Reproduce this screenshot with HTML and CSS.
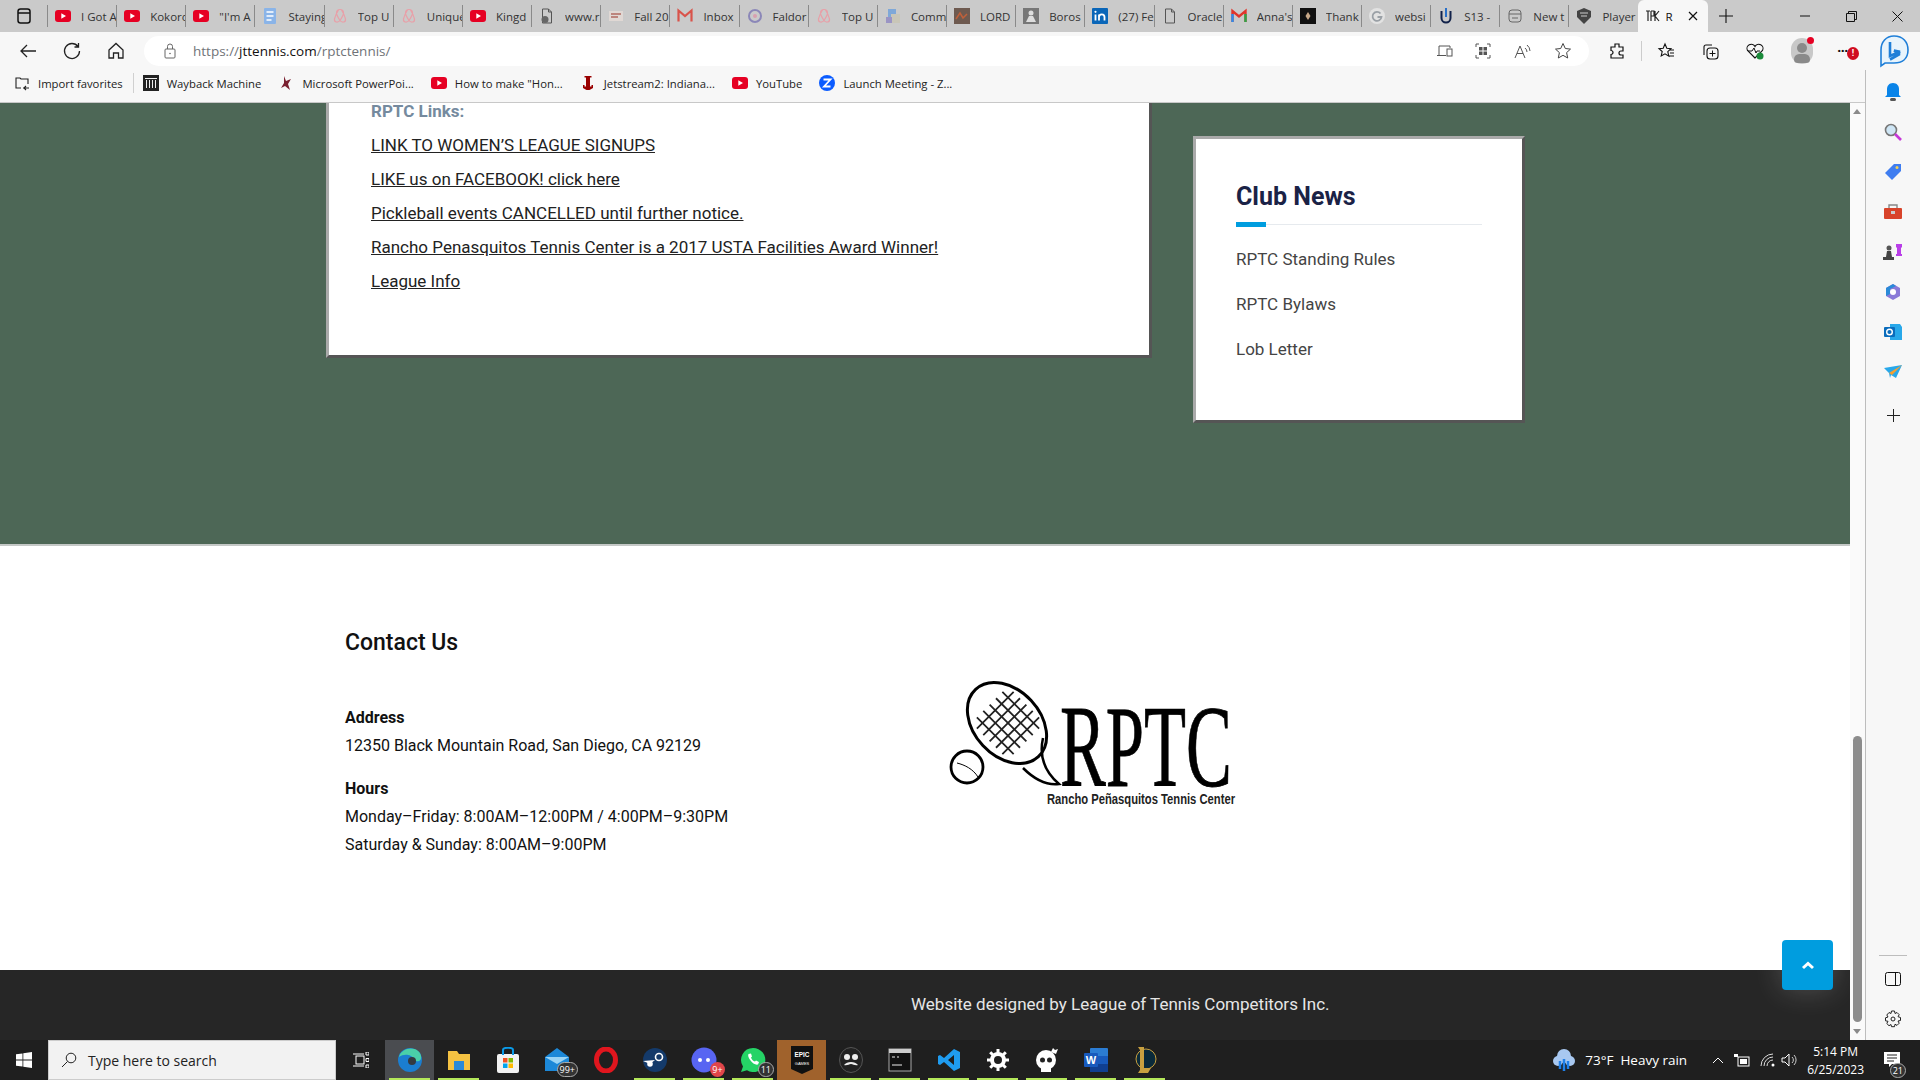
FILE: index.html
```html
<!DOCTYPE html>
<html lang="en">
<head>
    <meta charset="UTF-8">
    <title>RPTC Tennis</title>
    <link rel="stylesheet" href="styles.css">
</head>
<body>

<svg class="defs" width="0" height="0">
    <symbol id="yt" viewBox="0 0 16 16"><rect y="2" width="16" height="12" rx="3" fill="#e60023"/><path d="M6.3 5.2v5.6L11 8z" fill="#fff"/></symbol>
    <symbol id="air" viewBox="0 0 16 16"><path d="M8 12.5C5 8 4.5 6 4.5 5a3.5 3.5 0 0 1 7 0c0 1-.5 3-3.5 7.5zM8 12.5c2 2.5 6 2 5.5-1.5C13 9 10.5 3.5 9.5 2M8 12.5c-2 2.5-6 2-5.5-1.5C3 9 5.5 3.5 6.5 2" fill="none" stroke="#e8a0a8" stroke-width="1.2"/></symbol>
    <symbol id="page" viewBox="0 0 16 16"><path d="M3.5 1h6l3 3v11h-9zM9.5 1v3h3" fill="none" stroke="#555"/></symbol>
    <symbol id="grid" viewBox="0 0 16 16"><rect x="2" y="2" width="12" height="12" rx="3" fill="none" stroke="#666"/><path d="M2 6h12M5 10h6" stroke="#666"/></symbol>
</svg>

<div class="tabstrip">
    <div class="strip-btn">
        <svg width="14" height="16" viewBox="0 0 14 16"><rect x="1" y="1" width="12" height="14" rx="2.5" fill="none" stroke="#111" stroke-width="1.5"/><path d="M1 5h12" stroke="#111" stroke-width="1.5"/></svg>
    </div>
    <div class="tab"><svg class="fav"><use href="#yt"/></svg><span>I Got A</span></div>
    <div class="tab"><svg class="fav"><use href="#yt"/></svg><span>Kokoro</span></div>
    <div class="tab"><svg class="fav"><use href="#yt"/></svg><span>"I'm A</span></div>
    <div class="tab"><svg class="fav" viewBox="0 0 16 16"><rect x="2" width="12" height="16" rx="1" fill="#8ab4e8"/><path d="M4.5 4h7M4.5 8h7M4.5 12h5" stroke="#fff" stroke-width="1.4"/></svg><span>Staying</span></div>
    <div class="tab"><svg class="fav"><use href="#air"/></svg><span>Top U</span></div>
    <div class="tab"><svg class="fav"><use href="#air"/></svg><span>Unique</span></div>
    <div class="tab"><svg class="fav"><use href="#yt"/></svg><span>Kingd</span></div>
    <div class="tab"><svg class="fav" viewBox="0 0 16 16"><use href="#page"/><circle cx="6" cy="11.5" r="3.5" fill="#666"/></svg><span>www.r</span></div>
    <div class="tab"><svg class="fav" viewBox="0 0 16 16"><rect x="1" y="3" width="14" height="10" fill="#e0d8d4"/><path d="M3 6h10M3 9h7" stroke="#b06a60" stroke-width="1.5"/></svg><span>Fall 20</span></div>
    <div class="tab"><svg class="fav" viewBox="0 0 16 16"><path d="M1.5 13.5v-11L8 8l6.5-5.5v11" fill="none" stroke="#d9534a" stroke-width="2.2"/></svg><span>Inbox</span></div>
    <div class="tab"><svg class="fav" viewBox="0 0 16 16"><circle cx="8" cy="8" r="6" fill="none" stroke="#8b87b8" stroke-width="2"/><circle cx="8" cy="8" r="2" fill="#d9a0b0"/></svg><span>Faldor</span></div>
    <div class="tab"><svg class="fav"><use href="#air"/></svg><span>Top U</span></div>
    <div class="tab"><svg class="fav" viewBox="0 0 16 16"><rect x="3" y="1" width="8" height="10" fill="#7fa8d8"/><rect x="6" y="6" width="9" height="9" fill="#c9c6b8"/><rect x="1" y="9" width="6" height="6" fill="#9a94c4"/></svg><span>Comm</span></div>
    <div class="tab"><svg class="fav" viewBox="0 0 16 16"><rect width="16" height="16" fill="#6e5a50"/><path d="M2 11l4-6 3 5 4-4" stroke="#c0603a" fill="none" stroke-width="1.5"/></svg><span>LORD</span></div>
    <div class="tab"><svg class="fav" viewBox="0 0 16 16"><rect width="16" height="16" fill="#777"/><circle cx="8" cy="5" r="2.5" fill="#ddd"/><path d="M3 14l3-6h4l3 6z" fill="#ddd"/></svg><span>Boros</span></div>
    <div class="tab"><svg class="fav" viewBox="0 0 16 16"><rect width="16" height="16" rx="1" fill="#0a66b8"/><path d="M3.5 6.5v6M7 12.5v-6M7 9c0-3.5 5.5-3.5 5.5 0v3.5" stroke="#fff" stroke-width="1.8" fill="none"/><circle cx="3.5" cy="3.8" r="1.1" fill="#fff"/></svg><span>(27) Fe</span></div>
    <div class="tab"><svg class="fav"><use href="#page"/></svg><span>Oracle</span></div>
    <div class="tab"><svg class="fav" viewBox="0 0 16 16"><path d="M1.5 14V3L8 8.5 14.5 3v11" fill="none" stroke="#e0352b" stroke-width="2.4"/><path d="M1.5 14V6" stroke="#2a8ff0" stroke-width="2.4"/><path d="M14.5 14V6" stroke="#2aa84a" stroke-width="2.4"/></svg><span>Anna's</span></div>
    <div class="tab"><svg class="fav" viewBox="0 0 16 16"><rect width="16" height="16" fill="#111"/><path d="M8 4l2.5 4L8 12 5.5 8z" fill="#c8a888"/></svg><span>Thank</span></div>
    <div class="tab"><svg class="fav" viewBox="0 0 16 16"><circle cx="8" cy="8" r="8" fill="#e2e2e2"/><path d="M11.5 5.5A4.5 4.5 0 1 0 12.5 9H8.5" fill="none" stroke="#9aa0a6" stroke-width="1.8"/></svg><span>websi</span></div>
    <div class="tab"><svg class="fav" viewBox="0 0 16 16"><path d="M3.5 3v7a4.5 4.5 0 0 0 9 0V3" fill="none" stroke="#12224a" stroke-width="2"/><path d="M8 0v9" stroke="#2a70c8" stroke-width="2"/></svg><span>S13 -</span></div>
    <div class="tab"><svg class="fav"><use href="#grid"/></svg><span>New t</span></div>
    <div class="tab"><svg class="fav" viewBox="0 0 16 16"><path d="M8 0l7 3v6l-7 7-7-7V3z" fill="#444"/><path d="M4 5h8M5 8h6" stroke="#ccc"/></svg><span>Player</span></div>
    <div class="tab active">
        <svg class="fav" viewBox="0 0 16 16"><path d="M1 3h4M3 3v10M6 3v10M6 3h3v5H6M10 3v10M14 3l-4 5 4 5" fill="none" stroke="#222" stroke-width="1.2"/></svg><span>R</span>
        <svg class="tab-close" width="10" height="10" viewBox="0 0 10 10"><path d="M1 1l8 8M9 1l-8 8" stroke="#111" stroke-width="1.2"/></svg>
    </div>
    <svg class="new-tab" width="14" height="14" viewBox="0 0 14 14"><path d="M7 0v14M0 7h14" stroke="#111" stroke-width="1.1"/></svg>
    <div class="window-btns">
        <svg width="10" height="10" viewBox="0 0 10 10"><path d="M0 5h10" stroke="#111"/></svg>
        <svg width="11" height="11" viewBox="0 0 11 11"><path d="M.5 2.5h8v8h-8zM2.5 2.5v-2h8v8h-2" fill="none" stroke="#111"/></svg>
        <svg width="11" height="11" viewBox="0 0 11 11"><path d="M.5.5l10 10M10.5.5l-10 10" stroke="#111"/></svg>
    </div>
</div>

<div class="toolbar">
    <svg class="nav-icon" viewBox="0 0 20 20"><path d="M18 10H3M9 4l-6 6 6 6" fill="none" stroke="#222" stroke-width="1.3"/></svg>
    <svg class="nav-icon" viewBox="0 0 20 20"><path d="M16 5.5A7.5 7.5 0 1 0 17.5 10M16.5 2v4h-4" fill="none" stroke="#222" stroke-width="1.3"/></svg>
    <svg class="nav-icon" viewBox="0 0 20 20"><path d="M3 9l7-6.5L17 9v8h-4.5v-5h-5v5H3z" fill="none" stroke="#222" stroke-width="1.3"/></svg>
    <div class="address">
        <svg class="lock" width="12" height="16" viewBox="0 0 12 16"><rect x="1" y="6" width="10" height="9" rx="1" fill="none" stroke="#666"/><path d="M3.5 6V3.5a2.5 2.5 0 0 1 5 0V6" fill="none" stroke="#666"/><circle cx="6" cy="10.5" r=".8" fill="#666"/></svg>
        <span class="url"><span class="url-dim">https://</span>jttennis.com<span class="url-dim">/rptctennis/</span></span>
        <div class="address-icons">
            <svg width="16" height="16" viewBox="0 0 16 16"><path d="M2 12V3h11v2M0 12.5h9" fill="none" stroke="#555"/><rect x="10" y="6" width="5" height="7" fill="none" stroke="#555"/></svg>
            <svg width="16" height="16" viewBox="0 0 16 16"><path d="M1 4V1h3M12 1h3v3M15 12v3h-3M4 15H1v-3" fill="none" stroke="#555"/><rect x="4" y="4" width="3.5" height="3.5" fill="#555"/><rect x="8.5" y="4" width="3.5" height="3.5" fill="#555"/><rect x="4" y="8.5" width="3.5" height="3.5" fill="#555"/><rect x="8.5" y="8.5" width="3.5" height="3.5" fill="#555"/></svg>
            <svg width="18" height="16" viewBox="0 0 18 16"><path d="M1 15L6 3l5 12M3 10.5h6M11 5a5 5 0 0 1 2 4M13 2a8 8 0 0 1 3 6" fill="none" stroke="#555"/></svg>
            <svg width="18" height="18" viewBox="0 0 18 18"><path d="M9 1.5l2.3 5 5.2.6-3.900 3.500 1.100 5.400L9 13.300 4.300 16l1.100-5.400L1.500 7.100l5.200-.6z" fill="none" stroke="#444"/></svg>
        </div>
    </div>
    <div class="tool-icons">
        <svg width="18" height="18" viewBox="0 0 18 18"><path d="M7 2h4v3h4v4h-2a2 2 0 0 0 0 4h2v3H3v-3.500a2 2 0 0 0 0-4V5h4z" fill="none" stroke="#111" stroke-width="1.2"/></svg>
        <span class="tool-sep"></span>
        <svg width="18" height="18" viewBox="0 0 18 18"><path d="M8 2l1.800 4.200 4.200.4-3.200 3 1 4.500L8 11.800 4.200 14l1-4.500L2 6.600l4.200-.4zM13 8h4M13 11h4M11 14h6" fill="none" stroke="#111" stroke-width="1.1"/></svg>
        <svg width="18" height="18" viewBox="0 0 18 18"><path d="M3 13V5a2 2 0 0 1 2-2h6" fill="none" stroke="#111" stroke-width="1.1"/><rect x="6" y="6" width="11" height="11" rx="3" fill="none" stroke="#111" stroke-width="1.1"/><path d="M11.5 8.5v6M8.5 11.5h6" stroke="#111"/></svg>
        <svg width="20" height="18" viewBox="0 0 20 18"><path d="M10 16L2.5 8.5a4 4 0 0 1 7.5-4 4 4 0 0 1 7.5 4z" fill="none" stroke="#111" stroke-width="1.1"/><path d="M3 9h4l2-3 2 5 1-2h3" fill="none" stroke="#111"/><circle cx="15" cy="14" r="3.5" fill="#1a8a3a"/></svg>
        <span class="avatar"><span class="avatar-dot"></span></span>
        <span class="more">···<span class="more-badge">!</span></span>
    </div>
    <svg class="bing" width="34" height="34" viewBox="0 0 34 34"><path d="M17 2c9 0 14 6 14 14 0 9-6 13-14 13H8l-4 3v-16C4 8 9 2 17 2z" fill="#e8f4fc" stroke="#1f7fd8" stroke-width="1.6"/><path d="M13 8v14l8-3.500-4-2 5 1v3l-9 5" fill="none" stroke="#1f7fd8" stroke-width="2.6"/></svg>
</div>

<div class="bookmarks">
    <div class="bm bm-import">
        <svg width="16" height="16" viewBox="0 0 16 16"><path d="M7 13H2V3h4l1 1h7v5M9 13h6M12 11l-2 2 2 2" fill="none" stroke="#222" stroke-width="1.1"/></svg>
        Import favorites
    </div>
    <span class="bm-sep"></span>
    <div class="bm">
        <svg width="16" height="16" viewBox="0 0 16 16"><rect width="16" height="16" fill="#222"/><path d="M3.5 5v8M6.5 5v8M9.5 5v8M12.5 5v8M2 3.5h12" stroke="#eee"/></svg>
        Wayback Machine
    </div>
    <div class="bm">
        <svg width="16" height="16" viewBox="0 0 16 16"><path d="M6 1l2 5 5-2-3 5 2 6-5-4-4 2 3-5z" fill="#7a2030"/></svg>
        Microsoft PowerPoi...
    </div>
    <div class="bm"><svg width="16" height="16"><use href="#yt"/></svg>How to make "Hon...</div>
    <div class="bm">
        <svg width="16" height="16" viewBox="0 0 16 16"><path d="M4.5 1h7v1.500H10v9h1.500V10H13v3l-3.500 2h-3L3 13v-3h1.500v1.500H6v-9H4.500z" fill="#990000"/></svg>
        Jetstream2: Indiana...
    </div>
    <div class="bm"><svg width="16" height="16"><use href="#yt"/></svg>YouTube</div>
    <div class="bm">
        <svg width="16" height="16" viewBox="0 0 16 16"><circle cx="8" cy="8" r="8" fill="#0b5cff"/><path d="M4.5 4.5h7L5 11.5h6.5" fill="none" stroke="#fff" stroke-width="1.8"/></svg>
        Launch Meeting - Z...
    </div>
</div>

<div class="browser-body">
    <div class="page">
        <section class="hero">
            <div class="hero-inner">
                <div class="links-card">
                    <p class="links-title">RPTC Links:</p>
                    <p><a href="#">LINK TO WOMEN’S LEAGUE SIGNUPS</a></p>
                    <p><a href="#">LIKE us on FACEBOOK! click here</a></p>
                    <p><a href="#">Pickleball events CANCELLED until further notice.</a></p>
                    <p><a href="#">Rancho Penasquitos Tennis Center is a 2017 USTA Facilities Award Winner!</a></p>
                    <p><a href="#">League Info</a></p>
                </div>
                <aside class="news-card">
                    <h3>Club News</h3>
                    <div class="news-rule"></div>
                    <ul>
                        <li>RPTC Standing Rules</li>
                        <li>RPTC Bylaws</li>
                        <li>Lob Letter</li>
                    </ul>
                </aside>
            </div>
        </section>

        <section class="contact">
            <div class="contact-info">
                <h2>Contact Us</h2>
                <p class="contact-label">Address</p>
                <p>12350 Black Mountain Road, San Diego, CA 92129</p>
                <p class="contact-label hours">Hours</p>
                <p>Monday–Friday: 8:00AM–12:00PM / 4:00PM–9:30PM</p>
                <p>Saturday &amp; Sunday: 8:00AM–9:00PM</p>
            </div>
            <svg class="logo" width="320" height="170" viewBox="0 0 320 170">
                <ellipse cx="77" cy="63" rx="46" ry="33" transform="rotate(47 77 63)" fill="none" stroke="#000" stroke-width="3"/>
                <g transform="rotate(45 78 63)" stroke="#222" stroke-width="1.8">
                    <path d="M52 45h52M52 54h52M52 63h52M52 72h52M52 81h52"/>
                    <path d="M60 37v52M69 37v52M78 37v52M87 37v52M96 37v52"/>
                </g>
                <path d="M113 78c-4 18 2 34 16 46-16 2-28-8-36-16" fill="none" stroke="#000" stroke-width="2.5"/>
                <circle cx="37" cy="107" r="16" fill="none" stroke="#000" stroke-width="2.8"/>
                <path d="M27 103c8 2 16 6 21 14" fill="none" stroke="#000"/>
                <text class="logo-mark" x="130" y="126" textLength="172" lengthAdjust="spacingAndGlyphs">RPTC</text>
                <text class="logo-name" x="117" y="144" textLength="188" lengthAdjust="spacingAndGlyphs">Rancho Peñasquitos Tennis Center</text>
            </svg>
        </section>

        <footer class="site-footer">Website designed by League of Tennis Competitors Inc.</footer>

        <div class="to-top">
            <svg width="14" height="9" viewBox="0 0 14 9"><path d="M2 7l5-4.500L12 7" fill="none" stroke="#fff" stroke-width="3"/></svg>
        </div>
    </div>

    <div class="scrollbar">
        <span class="arrow-up"></span>
        <div class="thumb"></div>
        <span class="arrow-down"></span>
    </div>
</div>

<div class="sidebar">
    <div class="side-top">
        <svg width="18" height="20" viewBox="0 0 18 20"><path d="M9 1c4 0 6 3 6 6v6l2 2H1l2-2V7c0-3 2-6 6-6z" fill="#0a84e8"/><rect x="6" y="16" width="6" height="3" rx="1.5" fill="#555"/></svg>
        <svg width="18" height="18" viewBox="0 0 18 18"><circle cx="7" cy="7" r="5.5" fill="#cfe6f5" stroke="#777" stroke-width="1.6"/><path d="M11 11l6 6" stroke="#c637d8" stroke-width="2.6"/></svg>
        <svg width="18" height="18" viewBox="0 0 18 18"><path d="M1 10l9-9h7v7l-9 9z" fill="#3f7df0"/><circle cx="13" cy="4.5" r="1.5" fill="#f5d050"/></svg>
        <svg width="20" height="16" viewBox="0 0 20 16"><rect x="1" y="4" width="18" height="11" rx="1" fill="#d8432a"/><path d="M6 4V1h8v3" fill="none" stroke="#888" stroke-width="1.4"/><rect x="8" y="7" width="4" height="3" fill="#ccc"/></svg>
        <svg width="20" height="18" viewBox="0 0 20 18"><path d="M13 1h6v3l-1 1v6h1v2h-6v-2h1V5l-1-1z" fill="#b93ee8"/><circle cx="6" cy="5" r="2.5" fill="#555"/><path d="M4 8h4l1 6h2v3H0v-3h3z" fill="#444"/></svg>
        <svg width="18" height="18" viewBox="0 0 18 18"><path d="M9 1l7 4v8l-7 4-7-4V5z" fill="#8a7ad8"/><path d="M2 5l7-4 3 2-6 3v5l-4 2z" fill="#2a8ad8"/><circle cx="9" cy="9" r="3" fill="#fff"/></svg>
        <svg width="18" height="18" viewBox="0 0 18 18"><path d="M6 1h10l2 3v13H6z" fill="#28a8ea"/><rect y="4" width="11" height="10" rx="1" fill="#0a6cbc"/><circle cx="5.5" cy="9" r="2.8" fill="none" stroke="#fff" stroke-width="1.4"/></svg>
        <svg width="18" height="14" viewBox="0 0 18 14"><path d="M0 3l18-3-6 13-5-3-1 3-1-5z" fill="#28a8ea"/><path d="M5 8L18 0 8 10z" fill="#f5a030"/></svg>
        <svg class="side-add" width="13" height="13" viewBox="0 0 13 13"><path d="M6.5 0v13M0 6.500h13" stroke="#222"/></svg>
    </div>
    <div class="side-bottom">
        <span class="side-rule"></span>
        <svg width="16" height="14" viewBox="0 0 16 14"><rect x=".5" y=".5" width="15" height="13" rx="2" fill="none" stroke="#111"/><path d="M10.5 1v12" stroke="#111"/></svg>
        <svg width="18" height="18" viewBox="0 0 18 18"><path d="M7.5 1h3l.5 2.500 2-1 2.200 2.200-1.200 2 2.500.8v3l-2.500.5 1.200 2.200-2.200 2.200-2-1.200-.5 2.500h-3L7 14.500l-2 1.200-2.200-2.200L4 11.300l-2.500-.5v-3l2.500-.8-1.200-2L5 2.500l2 1z" fill="none" stroke="#222"/><circle cx="9" cy="9" r="2" fill="none" stroke="#222"/></svg>
    </div>
</div>

<div class="taskbar">
    <div class="start">
        <svg width="16" height="16" viewBox="0 0 16 16"><path d="M0 2.3l6.500-.9v6.200H0zM7.300 1.300L16 0v7.600H7.300zM0 8.400h6.500v6.200L0 13.700zM7.300 8.400H16V16l-8.700-1.200z" fill="#fff"/></svg>
    </div>
    <div class="search">
        <svg width="16" height="16" viewBox="0 0 16 16"><circle cx="10" cy="6" r="4.8" fill="none" stroke="#222"/><path d="M6.5 9.5L1 15" stroke="#222"/></svg>
        Type here to search
    </div>
    <div class="task-item">
        <svg width="16" height="16" viewBox="0 0 16 16"><rect x="3" y="4" width="8" height="8" fill="none" stroke="#fff"/><path d="M0 2h11M0 14h11M13 0h3v3h-3zM13 6.500h3v3h-3zM13 13h3v3h-3z" fill="none" stroke="#fff"/></svg>
    </div>
    <div class="task-item on active-app">
        <svg width="26" height="26" viewBox="0 0 26 26"><circle cx="13" cy="13" r="12" fill="#1b7ed0"/><path d="M2 10C4 2 15-1 21 4c4 3 4 9 1 10-3 1-6-1-6-3-1-3-9-5-14-1z" fill="#4ad0a8"/><circle cx="15" cy="14" r="4" fill="#333a40"/></svg>
    </div>
    <div class="task-item on">
        <svg width="24" height="22" viewBox="0 0 24 22"><path d="M1 2h9l2 3h11v16H1z" fill="#f5c242"/><rect x="7" y="12" width="10" height="9" fill="#2a8ad8"/></svg>
    </div>
    <div class="task-item">
        <svg width="22" height="26" viewBox="0 0 22 26"><rect y="7" width="22" height="19" rx="2" fill="#f2f2f2"/><path d="M6 8V3c0-3 10-3 10 0v5" fill="none" stroke="#0a9ae8" stroke-width="2"/><rect x="6" y="11" width="4.5" height="4.5" fill="#f25022"/><rect x="11.5" y="11" width="4.5" height="4.5" fill="#7fba00"/><rect x="6" y="16.5" width="4.5" height="4.5" fill="#00a4ef"/><rect x="11.5" y="16.5" width="4.5" height="4.5" fill="#ffb900"/></svg>
    </div>
    <div class="task-item">
        <svg width="26" height="24" viewBox="0 0 26 24"><path d="M1 9l12-9 12 9v14H1z" fill="#1c88d8"/><path d="M1 9l12 7 12-7" fill="#9ad4f5"/></svg>
        <span class="count">99+</span>
    </div>
    <div class="task-item">
        <svg width="24" height="26" viewBox="0 0 24 26"><ellipse cx="12" cy="13" rx="9.5" ry="11" fill="none" stroke="#e0161e" stroke-width="5"/></svg>
    </div>
    <div class="task-item on">
        <svg width="24" height="24" viewBox="0 0 24 24"><circle cx="12" cy="12" r="12" fill="#143a6a"/><circle cx="16" cy="9" r="3.5" fill="none" stroke="#fff" stroke-width="1.6"/><path d="M0 13l7 3 5-4" fill="#fff"/><circle cx="7" cy="16" r="2.8" fill="#fff"/></svg>
    </div>
    <div class="task-item on">
        <svg width="26" height="26" viewBox="0 0 26 26"><circle cx="13" cy="13" r="12.5" fill="#5865f2"/><circle cx="9" cy="13" r="2" fill="#fff"/><circle cx="17" cy="13" r="2" fill="#fff"/></svg>
        <span class="count red">9+</span>
    </div>
    <div class="task-item on">
        <svg width="26" height="26" viewBox="0 0 26 26"><path d="M13 1a12 12 0 0 0-10 18.5L1 25l6-1.800A12 12 0 1 0 13 1z" fill="#25d366"/><path d="M8.5 7c-2 3 5 12 9.500 10.500l1-2.500-3-1.500-1 1c-2-.5-3.500-2.500-4-4l1-1-1-3z" fill="#fff"/></svg>
        <span class="count">11</span>
    </div>
    <div class="task-item epic">
        <svg width="24" height="30" viewBox="0 0 24 30"><path d="M1 1h22v23l-11 5-11-5z" fill="#111"/><text class="epic-text" x="12" y="12" text-anchor="middle" textLength="15" lengthAdjust="spacingAndGlyphs">EPIC</text><text class="epic-small" x="12" y="20" text-anchor="middle">GAMES</text></svg>
    </div>
    <div class="task-item on">
        <svg width="24" height="26" viewBox="0 0 24 26"><ellipse cx="12" cy="13" rx="11.5" ry="12.5" fill="#222" stroke="#555"/><circle cx="8" cy="10" r="3" fill="#eee"/><circle cx="16" cy="10" r="3" fill="#eee"/><path d="M5 18c3-4 11-4 14 0-3 1-5-1-7-1s-4 2-7 1z" fill="#eee"/></svg>
    </div>
    <div class="task-item on">
        <svg width="24" height="24" viewBox="0 0 24 24"><rect x="1" y="1" width="22" height="22" fill="#111" stroke="#aaa"/><rect x="1" y="1" width="22" height="4" fill="#ccc"/><path d="M4 9h3M9 9h2M4 17h10" stroke="#eee"/></svg>
    </div>
    <div class="task-item on">
        <svg width="24" height="24" viewBox="0 0 24 24"><path d="M17 1l6 3v16l-6 3L7 14l-4 3-2-1V8l2-1 4 3zM17 7l-6 5 6 5z" fill="#1f9cf0" fill-rule="evenodd"/></svg>
    </div>
    <div class="task-item on">
        <svg width="24" height="24" viewBox="0 0 24 24"><circle cx="12" cy="12" r="6" fill="none" stroke="#fff" stroke-width="4"/><path d="M12 1v5M12 18v5M1 12h5M18 12h5M4.2 4.2l3.500 3.500M16.300 16.300l3.500 3.500M19.800 4.200l-3.500 3.500M7.700 16.300l-3.500 3.500" stroke="#fff" stroke-width="3"/></svg>
    </div>
    <div class="task-item on">
        <svg width="24" height="26" viewBox="0 0 24 26"><circle cx="11" cy="13" r="10" fill="#fff"/><rect x="6" y="20" width="10" height="5" fill="#fff"/><circle cx="7.5" cy="13" r="2.5" fill="#222"/><circle cx="14.5" cy="13" r="2.5" fill="#222"/><path d="M16 5l2-4 2 2 3-1-2 5z" fill="#fff"/></svg>
    </div>
    <div class="task-item on">
        <svg width="26" height="26" viewBox="0 0 26 26"><rect x="7" y="1" width="18" height="24" rx="1" fill="#2b7cd3"/><rect x="7" y="9" width="18" height="8" fill="#185abd"/><rect x="7" y="17" width="18" height="8" fill="#103f91"/><rect x="1" y="6" width="14" height="14" rx="1" fill="#185abd"/><text class="word-text" x="8" y="17" text-anchor="middle">W</text></svg>
    </div>
    <div class="task-item on">
        <svg width="24" height="28" viewBox="0 0 24 28"><circle cx="13" cy="13" r="10" fill="#0a2a3a" stroke="#c8a040"/><path d="M5 1h6v21h7l-3 5H5l2-3V4z" fill="#c8a040"/></svg>
    </div>

    <div class="tray">
        <svg class="weather" width="24" height="24" viewBox="0 0 24 24"><circle cx="12" cy="8" r="7" fill="#a8c8f0"/><circle cx="6" cy="13" r="5" fill="#a8c8f0"/><circle cx="18" cy="13" r="5" fill="#a8c8f0"/><path d="M8 13v8M12 11v12M16 13v8" stroke="#1f7fe8" stroke-width="2.5"/></svg>
        <span class="weather-text">73°F&nbsp; Heavy rain</span>
        <svg width="12" height="8" viewBox="0 0 12 8"><path d="M1 7l5-5 5 5" fill="none" stroke="#fff"/></svg>
        <svg width="16" height="14" viewBox="0 0 16 14"><rect x="4" y="4" width="11" height="9" fill="none" stroke="#fff"/><rect x="6" y="6" width="7" height="5" fill="#fff"/><path d="M0 1h4v3H0z" fill="#fff"/></svg>
        <svg width="16" height="14" viewBox="0 0 16 14"><path d="M1 13a12 12 0 0 1 12-12M4 13a9 9 0 0 1 9-9M7 13a6 6 0 0 1 6-6" fill="none" stroke="#ddd"/><circle cx="13" cy="12" r="1.5" fill="#fff"/></svg>
        <svg class="volume" width="16" height="14" viewBox="0 0 16 14"><path d="M1 5h3l4-4v12L4 9H1z" fill="none" stroke="#fff"/><path d="M11 4a4 4 0 0 1 0 6M13 2a7 7 0 0 1 0 10" fill="none" stroke="#ccc"/></svg>
        <div class="clock"><span>5:14 PM</span><span>6/25/2023</span></div>
        <div class="notif">
            <svg width="16" height="16" viewBox="0 0 16 16"><path d="M0 0h16v12H8l-3 3v-3H0z" fill="#fff"/><path d="M3 3h10M3 6h10M3 9h7" stroke="#222"/></svg>
            <span class="count">21</span>
        </div>
    </div>
</div>

</body>
</html>
```

FILE: styles.css
```css
* {
    box-sizing: border-box;
}
html, body {
    margin: 0;
    height: 100%;
}
body {
    width: 1920px;
    height: 1080px;
    overflow: hidden;
    position: relative;
    background-color: #f7f7f7;
    font-family: Roboto, "Liberation Sans", sans-serif;
    color: #111;
}
.defs {
    position: absolute;
}

/* browser chrome */
.tabstrip {
    height: 32px;
    display: flex;
    align-items: center;
    background-color: #cacaca;
    font-family: "Open Sans", "Liberation Sans", sans-serif;
    font-size: 11.5px;
    color: #333;
}
.strip-btn {
    width: 47px;
    display: flex;
    justify-content: center;
}
.tab {
    width: 69.17px;
    height: 22px;
    flex-shrink: 0;
    display: flex;
    align-items: center;
    gap: 10px;
    padding-left: 7px;
    border-left: 1px solid #8a8a8a;
    overflow: hidden;
    white-space: nowrap;
}
.tab span {
    flex: 1;
    overflow: hidden;
}
.fav {
    width: 16px;
    height: 16px;
    flex-shrink: 0;
}
.tab.active {
    width: 70px;
    height: 32px;
    margin-top: 0;
    background-color: #f7f7f7;
    border-left: none;
    border-radius: 6px 6px 0 0;
    gap: 5px;
    color: #111;
}
.tab-close {
    flex-shrink: 0;
    margin-right: 10px;
}
.new-tab {
    margin-left: 11px;
}
.window-btns {
    margin-left: auto;
    width: 122px;
    display: flex;
    justify-content: space-between;
    padding: 0 17px 0 2px;
}

.toolbar {
    height: 38px;
    display: flex;
    align-items: center;
    padding-left: 18px;
}
.nav-icon {
    width: 20px;
    height: 20px;
    margin-right: 24px;
}
.address {
    width: 1445px;
    height: 30px;
    margin-left: -6px;
    display: flex;
    align-items: center;
    padding-left: 20px;
    background-color: #fff;
    border-radius: 15px;
    font-size: 13.5px;
    font-family: "Open Sans", "Liberation Sans", sans-serif;
}
.url {
    margin-left: 17px;
}
.url-dim {
    color: #6f7378;
}
.address-icons {
    margin-left: auto;
    width: 152px;
    display: flex;
    justify-content: space-between;
    align-items: center;
    padding-right: 17px;
}
.tool-icons {
    display: flex;
    align-items: center;
    margin-left: 19px;
}
.tool-icons svg {
    margin-right: 26px;
}
.tool-icons svg:first-child {
    margin-right: 15px;
}
.tool-sep {
    width: 1px;
    height: 20px;
    background-color: #ccc;
    margin-right: 15px;
}
.avatar {
    width: 22px;
    height: 26px;
    border-radius: 11px;
    background-color: #c8c8c8;
    position: relative;
    margin-right: 24px;
}
.avatar::before {
    content: "";
    position: absolute;
    left: 6px;
    top: 5px;
    width: 10px;
    height: 10px;
    border-radius: 50%;
    background-color: #8a8a8a;
}
.avatar::after {
    content: "";
    position: absolute;
    left: 3px;
    bottom: 1px;
    width: 16px;
    height: 9px;
    border-radius: 8px 8px 6px 6px;
    background-color: #8a8a8a;
}
.avatar-dot {
    position: absolute;
    z-index: 1;
    right: -1px;
    top: -1px;
    width: 7px;
    height: 7px;
    border-radius: 50%;
    background-color: #e60023;
}
.more {
    position: relative;
    font-size: 15px;
    font-weight: 700;
    line-height: 1;
    letter-spacing: -1px;
}
.more-badge {
    position: absolute;
    left: 10px;
    top: 3px;
    width: 12px;
    height: 13px;
    border-radius: 50%;
    background-color: #d00c20;
    font-size: 9px;
    line-height: 13px;
    letter-spacing: 0;
    text-align: center;
    color: #fff;
}
.bing {
    position: absolute;
    left: 1877px;
    top: 34px;
}

.bookmarks {
    height: 33px;
    display: flex;
    align-items: center;
    padding: 0 0 6px 14px;
    border-bottom: 1px solid #c8c8c8;
    font-family: "Open Sans", "Liberation Sans", sans-serif;
    font-size: 11.3px;
    color: #222;
    white-space: nowrap;
}
.bm {
    display: flex;
    align-items: center;
    gap: 8px;
    margin-right: 17px;
}
.bm-import {
    margin-right: 10px;
}
.bm-sep {
    width: 1px;
    height: 20px;
    background-color: #d0d0d0;
    margin-right: 9px;
}

/* page */
.browser-body {
    width: 1865px;
    height: 937px;
    display: flex;
}
.page {
    width: 1850px;
    height: 937px;
    position: relative;
    overflow: hidden;
    background-color: #fff;
}
.hero {
    height: 443px;
    background-color: #4d6756;
    border-bottom: 2px solid #c4c8c6;
}
.hero-inner {
    display: flex;
    align-items: flex-start;
    gap: 41px;
    padding-left: 326px;
}
.links-card {
    width: 826px;
    height: 255px;
    padding-left: 42px;
    background-color: #fff;
    border-style: solid;
    border-width: 0 3px 3px 3px;
    border-color: #aaa #555 #555 #aaa;
    font-size: 17px;
}
.links-card p {
    margin: 0;
    line-height: 34px;
}
.links-card a {
    color: #222;
}
.links-card .links-title {
    line-height: 16px;
    margin-bottom: 9px;
    font-weight: 700;
    color: #758a9e;
}
.news-card {
    width: 332px;
    height: 287px;
    margin-top: 33px;
    padding: 44px 40px 0 40px;
    background-color: #fff;
    border: 3px solid;
    border-color: #aaa #555 #555 #aaa;
}
.news-card h3 {
    margin: 0;
    font-size: 25px;
    line-height: 28px;
    font-weight: 700;
    color: #1a2246;
}
.news-rule {
    height: 1px;
    margin-top: 13px;
    margin-bottom: 12px;
    background-color: #e6eaee;
    position: relative;
}
.news-rule::before {
    content: "";
    position: absolute;
    left: 0;
    top: -2px;
    width: 30px;
    height: 5px;
    background-color: #009ddf;
}
.news-card ul {
    list-style: none;
    margin: 0;
    padding: 0;
}
.news-card li {
    font-size: 17px;
    line-height: 45px;
    color: #444;
}

.contact {
    height: 424px;
    display: flex;
    align-items: flex-start;
    padding-left: 345px;
    font-size: 16px;
    color: #111;
}
.contact-info {
    width: 585px;
    padding-top: 81px;
}
.contact-info h2 {
    margin: 0 0 45px;
    font-size: 23px;
    line-height: 32px;
    font-weight: 500;
}
.contact-info p {
    margin: 0;
    line-height: 28px;
}
.contact-label {
    font-weight: 700;
}
.contact-info .hours {
    margin-top: 15px;
}
.logo {
    margin-top: 114px;
}
.logo-mark {
    font-family: "Liberation Serif", serif;
    font-size: 116px;
    fill: #000;
    stroke: #000;
    stroke-width: 0.8px;
}
.logo-name {
    font-family: "Liberation Sans", sans-serif;
    font-size: 14px;
    font-weight: 700;
    fill: #222;
}
.site-footer {
    height: 70px;
    padding-left: 911px;
    padding-top: 20px;
    background-color: #262626;
    font-size: 17px;
    line-height: 28px;
    color: #e6e6e6;
}
.to-top {
    position: absolute;
    left: 1782px;
    top: 837px;
    width: 51px;
    height: 50px;
    display: flex;
    align-items: center;
    justify-content: center;
    border-radius: 4px;
    background-color: #009ddf;
    box-shadow: 0 0 30px rgba(255, 255, 255, 0.2);
}

.scrollbar {
    width: 15px;
    height: 937px;
    position: relative;
    background-color: #fafafa;
}
.arrow-up, .arrow-down {
    position: absolute;
    left: 3px;
    border-left: 4.5px solid transparent;
    border-right: 4.5px solid transparent;
}
.arrow-up {
    top: 6px;
    border-bottom: 5px solid #8a8a8a;
}
.arrow-down {
    bottom: 6px;
    border-top: 5px solid #8a8a8a;
}
.thumb {
    position: absolute;
    left: 3px;
    top: 633px;
    width: 9px;
    height: 286px;
    border-radius: 5px;
    background-color: #8c8c8c;
}

/* edge sidebar */
.sidebar {
    position: absolute;
    left: 1865px;
    top: 70px;
    width: 55px;
    height: 970px;
    display: flex;
    flex-direction: column;
    align-items: center;
    justify-content: space-between;
    border-left: 1px solid #bdbdbd;
    background-color: #f7f7f7;
}
.side-top {
    margin-top: 2px;
    display: grid;
    grid-auto-rows: 40px;
    align-items: center;
    justify-items: center;
}
.side-add {
    margin-top: 6px;
}
.side-bottom {
    width: 100%;
    height: 85px;
    display: flex;
    flex-direction: column;
    align-items: center;
}
.side-rule {
    width: 28px;
    height: 1px;
    margin-bottom: 16px;
    background-color: #bdbdbd;
}
.side-bottom svg:nth-child(2) {
    margin-bottom: 24px;
}

/* windows taskbar */
.taskbar {
    height: 40px;
    display: flex;
    align-items: center;
    position: absolute;
    left: 0;
    bottom: 0;
    width: 100%;
    background-color: #1f1f1f;
    font-family: "Open Sans", "Liberation Sans", sans-serif;
    color: #fff;
}
.start {
    width: 48px;
    display: flex;
    justify-content: center;
}
.search {
    width: 288px;
    height: 40px;
    display: flex;
    align-items: center;
    gap: 11px;
    padding-left: 12px;
    background-color: #f2f2f2;
    border: 1px solid #ccc;
    font-size: 14px;
    color: #222;
}
.task-item {
    width: 49px;
    height: 40px;
    flex-shrink: 0;
    display: flex;
    align-items: center;
    justify-content: center;
    position: relative;
}
.task-item.on::after {
    content: "";
    position: absolute;
    left: 4px;
    right: 4px;
    bottom: 0;
    height: 2px;
    background-color: #b4e85a;
}
.task-item.active-app {
    background-color: #4a4c50;
}
.task-item.epic {
    background-color: #a0622c;
}
.epic-text {
    font-family: "Liberation Sans", sans-serif;
    font-size: 8px;
    font-weight: 700;
    fill: #fff;
}
.epic-small {
    font-family: "Liberation Sans", sans-serif;
    font-size: 4px;
    fill: #fff;
}
.word-text {
    font-family: "Liberation Sans", sans-serif;
    font-size: 11px;
    font-weight: 700;
    fill: #fff;
}
.count {
    position: absolute;
    right: 3px;
    bottom: 3px;
    min-width: 15px;
    height: 15px;
    padding: 0 2px;
    border-radius: 8px;
    background-color: #333;
    border: 1px solid #aaa;
    font-size: 9px;
    line-height: 13px;
    text-align: center;
    color: #fff;
}
.count.red {
    background-color: #e0454a;
    border: none;
    line-height: 15px;
}
.tray {
    margin-left: auto;
    display: flex;
    align-items: center;
    gap: 10px;
    font-size: 13.5px;
}
.weather-text {
    margin-right: 15px;
    margin-left: -1px;
    white-space: nowrap;
}
.volume {
    margin-left: -5px;
}
.clock {
    display: flex;
    flex-direction: column;
    align-items: center;
    gap: 3px;
    font-size: 12px;
    line-height: 15px;
}
.notif {
    position: relative;
    width: 56px;
    height: 40px;
    margin-left: -10px;
    display: flex;
    align-items: center;
    justify-content: center;
}
.notif .count {
    right: 14px;
    bottom: 2px;
}
```
